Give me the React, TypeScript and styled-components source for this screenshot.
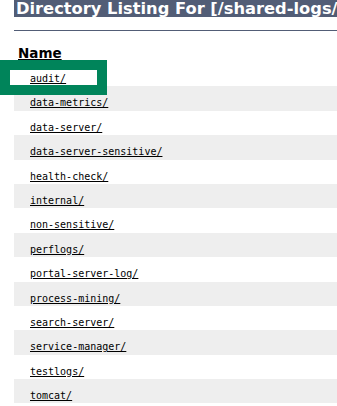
import React from 'react';
import styled, { createGlobalStyle } from 'styled-components';

const GlobalStyle = createGlobalStyle`
  html, body {
    margin: 0;
    padding: 0;
    background: #fff;
    overflow: hidden;
  }
`;

const Page = styled.div`
  padding-left: 14px;
  width: 400px;
`;

const Title = styled.h1`
  margin: 0;
  height: 17px;
  line-height: 17px;
  overflow: hidden;
  padding-left: 2px;
  background: #525d76;
  color: #fff;
  font-family: 'DejaVu Sans', sans-serif;
  font-weight: bold;
  font-size: 16.3px;
  white-space: nowrap;
`;

const Rule = styled.hr`
  margin: 13px 0 0;
  border: none;
  height: 1px;
  background: #525d76;
`;

const Table = styled.table`
  width: 100%;
  border-collapse: collapse;
  margin-top: 13px;
`;

const HeadCell = styled.th`
  text-align: left;
  padding: 0 0 0 4px;
  height: 18px;
  line-height: 18px;
  vertical-align: top;
  font-family: 'DejaVu Sans', sans-serif;
  font-weight: bold;
  font-size: 13.5px;
  color: #000;
  text-decoration: underline;
`;

const Row = styled.tr<{ $shaded: boolean }>`
  background: ${p => (p.$shaded ? '#eeeeee' : '#ffffff')};
`;

const Cell = styled.td`
  position: relative;
  height: 24.4px;
  box-sizing: border-box;
  padding: 8px 0 0 16px;
  vertical-align: top;
  line-height: 14px;
`;

const Link = styled.a`
  font-family: 'DejaVu Sans Mono', monospace;
  font-size: 10px;
  color: #000;
  text-decoration: underline;
`;

const FocusBox = styled.span`
  position: absolute;
  left: -14px;
  top: -2px;
  width: 107px;
  height: 35px;
  box-sizing: border-box;
  border: 10px solid #00845a;
  pointer-events: none;
`;

const folders = [
  'audit/',
  'data-metrics/',
  'data-server/',
  'data-server-sensitive/',
  'health-check/',
  'internal/',
  'non-sensitive/',
  'perflogs/',
  'portal-server-log/',
  'process-mining/',
  'search-server/',
  'service-manager/',
  'testlogs/',
  'tomcat/',
];

export default function App() {
  return (
    <>
      <GlobalStyle />
      <Page>
        <Title>Directory Listing For [/shared-logs/]</Title>
        <Rule />
        <Table>
          <thead>
            <tr>
              <HeadCell>Name</HeadCell>
            </tr>
          </thead>
          <tbody>
            {folders.map((name, i) => (
              <Row key={name} $shaded={i % 2 === 1}>
                <Cell>
                  {i === 0 && <FocusBox />}
                  <Link href={'#' + name}>{name}</Link>
                </Cell>
              </Row>
            ))}
          </tbody>
        </Table>
      </Page>
    </>
  );
}
